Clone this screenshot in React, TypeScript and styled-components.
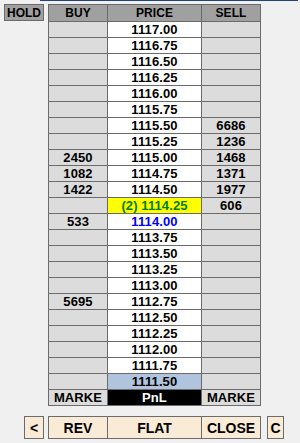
import React from 'react'
import styled, { createGlobalStyle, css } from 'styled-components'

const GlobalStyle = createGlobalStyle`
  body {
    margin: 0;
    background: #f0f0f0;
    font-family: 'Liberation Sans', Arial, sans-serif;
  }
`

const lineColor = '#6b6b6b'

type Tone = 'header' | 'side' | 'price' | 'current' | 'last' | 'pnl'

const toneStyle: Record<Tone, ReturnType<typeof css>> = {
  header: css`background: #a0a0a0; color: #000; font-size: 12px;`,
  side: css`background: #dcdcdc; color: #000;`,
  price: css`background: #ffffff; color: #000;`,
  current: css`background: #ffff00; color: #008000;`,
  last: css`background: #b0c4de; color: #000;`,
  pnl: css`background: #000000; color: #ffffff;`,
}

const Page = styled.div`
  width: 300px;
  height: 443px;
  display: flex;
  flex-direction: column;
  overflow: hidden;
`

const TopRule = styled.div`
  height: 1px;
  margin: 0 2px 0 40px;
  background: #23427a;
`

const Main = styled.div`
  display: flex;
  align-items: flex-start;
  padding-top: 3px;
`

const Side = styled.div`
  width: 44px;
  display: flex;
  justify-content: flex-end;
`

const HoldButton = styled.div`
  box-sizing: border-box;
  width: 40px;
  height: 17px;
  background: #a0a0a0;
  border: 1px solid ${lineColor};
  font-size: 12px;
  font-weight: bold;
  display: flex;
  align-items: center;
  justify-content: center;
`

const Ladder = styled.div`
  margin-left: 4px;
  display: grid;
  grid-template-columns: 58px 93px 58px;
  grid-template-rows: 16px repeat(24, 15px);
  gap: 1px;
  padding: 1px;
  background: ${lineColor};
`

const Cell = styled.div<{ $tone: Tone; $blue?: boolean }>`
  display: flex;
  align-items: center;
  justify-content: center;
  font-size: 13px;
  font-weight: bold;
  letter-spacing: 0.1px;
  white-space: nowrap;
  overflow: hidden;
  ${p => toneStyle[p.$tone]}
  ${p => p.$blue && css`color: #0000ff;`}
`

const Footer = styled.div`
  display: flex;
  margin-top: 10px;
  padding-left: 24px;
`

const SmallButton = styled.div<{ $width: number }>`
  box-sizing: border-box;
  width: ${p => p.$width}px;
  height: 23px;
  background: #faebd7;
  border: 1px solid ${lineColor};
  font-size: 14px;
  font-weight: bold;
  display: flex;
  align-items: center;
  justify-content: center;
`

const ButtonGroup = styled.div`
  margin: 0 6px 0 4px;
  display: grid;
  grid-template-columns: 58px 93px 58px;
  height: 23px;
  box-sizing: border-box;
  gap: 1px;
  padding: 1px;
  background: ${lineColor};
`

const GroupButton = styled.div`
  background: #faebd7;
  font-size: 14px;
  font-weight: bold;
  display: flex;
  align-items: center;
  justify-content: center;
`

const buys: Record<string, string> = {
  '1115.00': '2450',
  '1114.75': '1082',
  '1114.50': '1422',
  '1114.00': '533',
  '1112.75': '5695',
}

const sells: Record<string, string> = {
  '1115.50': '6686',
  '1115.25': '1236',
  '1115.00': '1468',
  '1114.75': '1371',
  '1114.50': '1977',
  '1114.25': '606',
}

const prices = Array.from({ length: 23 }, (_, i) => (1117 - i * 0.25).toFixed(2))

const priceTone = (price: string): Tone => {
  if (price === '1114.25') return 'current'
  if (price === '1111.50') return 'last'
  return 'price'
}

export default function App() {
  return <Page>
    <GlobalStyle />
    <TopRule />
    <Main>
      <Side>
        <HoldButton>HOLD</HoldButton>
      </Side>
      <Ladder>
        <Cell $tone="header">BUY</Cell>
        <Cell $tone="header">PRICE</Cell>
        <Cell $tone="header">SELL</Cell>
        {prices.map(price =>
          <React.Fragment key={price}>
            <Cell $tone="side">{buys[price] || ''}</Cell>
            <Cell $tone={priceTone(price)} $blue={price === '1114.00'}>
              {price === '1114.25' ? `(2) ${price}` : price}
            </Cell>
            <Cell $tone="side">{sells[price] || ''}</Cell>
          </React.Fragment>
        )}
        <Cell $tone="side">MARKE</Cell>
        <Cell $tone="pnl">PnL</Cell>
        <Cell $tone="side">MARKE</Cell>
      </Ladder>
    </Main>
    <Footer>
      <SmallButton $width={20}>&lt;</SmallButton>
      <ButtonGroup>
        <GroupButton>REV</GroupButton>
        <GroupButton>FLAT</GroupButton>
        <GroupButton>CLOSE</GroupButton>
      </ButtonGroup>
      <SmallButton $width={17}>C</SmallButton>
    </Footer>
  </Page>
}
